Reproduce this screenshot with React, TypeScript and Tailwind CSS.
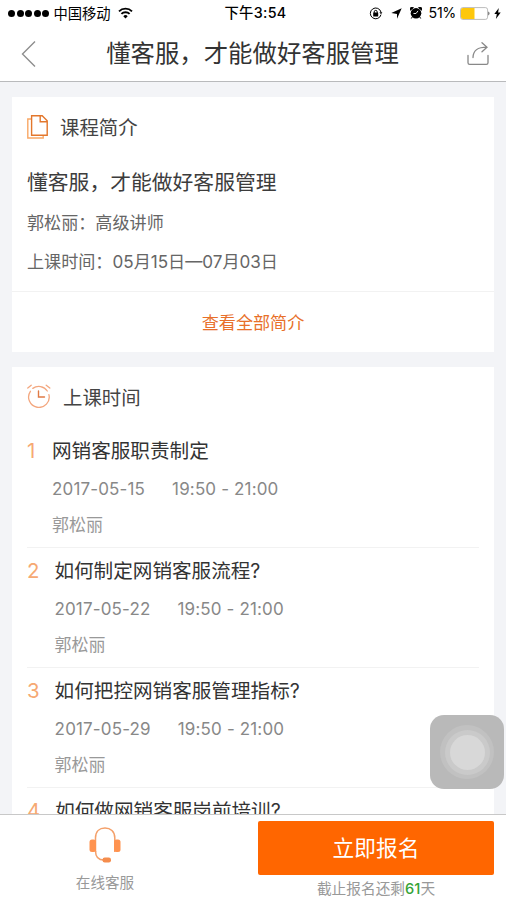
import React from 'react';

const lessons = [
  { title: '网销客服职责制定', date: '2017-05-15', time: '19:50 - 21:00', teacher: '郭松丽' },
  { title: '如何制定网销客服流程?', date: '2017-05-22', time: '19:50 - 21:00', teacher: '郭松丽' },
  { title: '如何把控网销客服管理指标?', date: '2017-05-29', time: '19:50 - 21:00', teacher: '郭松丽' },
  { title: '如何做网销客服岗前培训?', date: '2017-06-05', time: '19:50 - 21:00', teacher: '郭松丽' }
];

const StatusBar = () => (
  <div className="grid h-[26px] grid-cols-[1fr_auto_1fr] items-center pl-2 pr-[5px] text-black">
    <div className="flex items-center">
      <div className="flex gap-[1.6px]">
        {[0, 1, 2, 3, 4].map((dot) => (
          <span key={dot} className="h-[7px] w-[7px] rounded-full bg-black"></span>
        ))}
      </div>
      <span className="ml-[4px] pt-px text-[14.3px] leading-[25px]">中国移动</span>
      <svg className="ml-[7px]" width="15" height="12" viewBox="0 0 15 12" fill="none" stroke="#000" strokeWidth="1.9">
        <path d="M1 4.3a9.2 9.2 0 0 1 13 0" />
        <path d="M3.4 6.9a5.8 5.8 0 0 1 8.2 0" />
        <path d="M7.5 11.4 5.3 9.2a3.1 3.1 0 0 1 4.4 0z" fill="#000" stroke="none" />
      </svg>
    </div>
    <span className="pl-[2px] text-[14.3px] font-medium leading-[26px] tracking-[0.35px]">下午3:54</span>
    <div className="flex items-center justify-end">
      {/* Rotation lock */}
      <svg width="14" height="13" viewBox="0 0 14 13" fill="none" stroke="#000" strokeWidth="1">
        <path d="M12 7.6A5.4 5.4 0 1 1 12 5.2" />
        <path d="M10.4 5.2h3L12 7.2z" fill="#000" stroke="none" />
        <path d="M5.2 6V4.9a1.5 1.5 0 0 1 3 0V6" />
        <rect x="4.2" y="5.6" width="5" height="3.8" rx=".5" fill="#000" stroke="none" />
      </svg>
      <svg className="ml-[8px]" width="11" height="11" viewBox="0 0 11 11">
        <path d="M10.7.3 6 10.7V5.9L.3 5z" fill="#000" />
      </svg>
      {/* Alarm */}
      <svg className="ml-[8px]" width="12" height="12" viewBox="0 0 12 12">
        <circle cx="6" cy="6.2" r="5.3" fill="#000" />
        <path d="M.4 3.2A2 2 0 0 1 3.4.6zM11.6 3.2A2 2 0 0 0 8.6.6zM2.5 9.5l-1.2 2M9.5 9.5l1.2 2" fill="#000" stroke="#000" />
        <path d="M8 3.9 6 6.5H3.5" fill="none" stroke="#fff" strokeWidth=".9" />
      </svg>
      <span className="ml-[7px] text-[14.2px] leading-[26px] tracking-[-0.3px]">51%</span>
      <svg className="ml-[4px]" width="30" height="13" viewBox="0 0 30 13">
        <rect x=".6" y=".6" width="27" height="11.8" rx="2.2" fill="#fff" stroke="#aaa" strokeWidth=".8" />
        <path d="M3 1h11.5v11H3a2 2 0 0 1-2-2V3a2 2 0 0 1 2-2z" fill="#fdc70c" />
        <path d="M28.4 4.6c1.4.6 1.4 3.2 0 3.8z" fill="#444" />
      </svg>
      <svg className="ml-[4px]" width="7" height="11" viewBox="0 0 7 11">
        <path d="M4.8 0 .3 6h2.5L1.9 11 6.7 4.6H4.1z" fill="#000" />
      </svg>
    </div>
  </div>
);

const TitleBar = () => (
  <div className="flex h-[55px] items-center justify-between pl-[21px] pr-[17px]">
    <svg width="16" height="28" viewBox="0 0 16 28" fill="none" stroke="#8e8e8e" strokeWidth="1.4">
      <path d="M14 1.5 1.5 14 14 26.5" />
    </svg>
    <h1 className="pl-px text-[24.4px] leading-[55px] text-[#333]">懂客服，才能做好客服管理</h1>
    <svg width="22" height="24" viewBox="0 0 22 24" fill="none" stroke="#888" strokeWidth="1.3" strokeLinecap="round">
      <path d="M1 13.5v7.2c0 1.1.6 1.7 1.7 1.7h16.6c1.1 0 1.7-.6 1.7-1.7v-7.2" />
      <path d="M6 15.5C6.2 8.5 10 5.2 20 5.2M15 .8l5 4.4-5 4.6" />
    </svg>
  </div>
);

const CourseIntro = () => (
  <section className="bg-white">
    <div className="flex h-[60px] items-center gap-[12px] pl-[15px]">
      <svg width="21" height="24" viewBox="0 0 21 24" fill="none" strokeWidth="1.4">
        <path d="M4 4H.8v19h15.4v-2.5" stroke="#f9a866" />
        <path d="M4.6.8h10.6l5 5v14.5H4.6z" stroke="#e3772c" />
        <path d="M13.2.8v6h7" stroke="#e3772c" />
      </svg>
      <h2 className="pt-[3px] text-[19.4px] text-[#444]">课程简介</h2>
    </div>
    <div className="px-[15px] pb-[5px]">
      <p className="text-[20.8px] leading-[51px] text-[#3c3c3c]">懂客服，才能做好客服管理</p>
      <p className="text-[17.1px] leading-[30px] text-[#666]">郭松丽：高级讲师</p>
      <p className="text-[17.1px] leading-[48px] text-[#666]">上课时间：05月15日—07月03日</p>
    </div>
    <button className="block h-[61px] w-full border-t border-[#f2f2f2] pt-px text-center text-[17.1px] text-[#e8702a]">
      查看全部简介
    </button>
  </section>
);

const Schedule = () => (
  <section className="bg-white px-[15px]">
    <div className="flex h-[61px] items-center gap-[12px]">
      <svg className="mb-[3px]" width="24" height="24" viewBox="0 0 24 24" fill="none" stroke="#f3a77f" strokeWidth="1.3" strokeLinecap="round">
        <path d="M3.4 7.3A10.3 10.3 0 1 0 21.9 10.6" />
        <path d="M5.8 4.4A10.3 10.3 0 0 1 20.3 7" />
        <path d="M.8 4 4.2 1.2M19.2 1.2 22.8 4" />
        <path d="M11.5 7v6h6" stroke="#e07a45" strokeWidth="1.4" />
      </svg>
      <h2 className="pt-[2px] text-[19.4px] text-[#444]">上课时间</h2>
    </div>
    {lessons.map((lesson, index) => (
      <div key={index} className="flex gap-[15px] border-b border-[#f2f2f2]">
        <span className="min-w-[10px] text-[20.4px] leading-[46px] text-[#f6a973]">{index + 1}</span>
        <div>
          <h3 className="pt-px text-[19.6px] leading-[45px] text-[#333]">{lesson.title}</h3>
          <p className="flex gap-[27px] text-[17px] leading-[30px] tracking-[0.15px] text-[#888]">
            <span>{lesson.date}</span>
            <span>{lesson.time}</span>
          </p>
          <p className="text-[17px] leading-[43px] text-[#999]">{lesson.teacher}</p>
        </div>
      </div>
    ))}
  </section>
);

const BottomBar = () => (
  <footer className="flex h-[86px] shrink-0 border-t border-[#c8c8c8] bg-white">
    <div className="flex w-[210px] flex-col items-center pt-[12px]">
      <svg width="32" height="36" viewBox="0 0 32 36" fill="none" stroke="#f4a06a" strokeWidth="1.5">
        <path d="M6.5 25V11C6.5 4.5 10.5 1 16 1s9.8 3.5 9.8 10v14" />
        <path d="M6.5 24c0 6 3 9 8.5 9" />
        <rect x=".5" y="12.5" width="6.5" height="12.5" rx="2.5" fill="#ff9350" stroke="none" />
        <rect x="25" y="12.5" width="6.5" height="12.5" rx="2.5" fill="#ff9350" stroke="none" />
        <rect x="13.5" y="30.5" width="8.5" height="5" rx="2.2" fill="#f58d4d" stroke="none" />
      </svg>
      <span className="mt-[8px] text-[14.6px] leading-[24px] text-[#999]">在线客服</span>
    </div>
    <div className="ml-[48px] w-[236px] pt-[6px] text-center">
      <button className="block h-[54px] w-full rounded-[2px] bg-[#ff6600] text-[21.7px] text-white">立即报名</button>
      <p className="pt-px text-[14.7px] leading-[27px] text-[#999]">
        截止报名还剩<span className="font-medium text-[#36a336]">61</span>天
      </p>
    </div>
  </footer>
);

const App = () => {
  return (
    <div className="relative flex h-[900px] w-[506px] flex-col overflow-hidden bg-[#f3f4f7] font-['Inter','Noto_Sans_CJK_SC',sans-serif]">
      <header className="shrink-0 border-b border-[#b9babc] bg-white">
        <StatusBar />
        <TitleBar />
      </header>
      <main className="flex min-h-0 flex-1 flex-col gap-[15px] overflow-hidden px-3 pt-[15px]">
        <CourseIntro />
        <Schedule />
      </main>
      <BottomBar />

      {/* Floating assistive button */}
      <div className="absolute left-[430px] top-[715px] flex h-[74px] w-[74px] items-center justify-center rounded-[14px] bg-[#b9b9b9]">
        <div className="flex h-[54px] w-[54px] items-center justify-center rounded-full bg-[#c1c1c1]">
          <div className="flex h-[45px] w-[45px] items-center justify-center rounded-full bg-[#cacaca]">
            <div className="h-[35px] w-[35px] rounded-full bg-[#d8d8d8]"></div>
          </div>
        </div>
      </div>
    </div>
  );
};

export default App;
